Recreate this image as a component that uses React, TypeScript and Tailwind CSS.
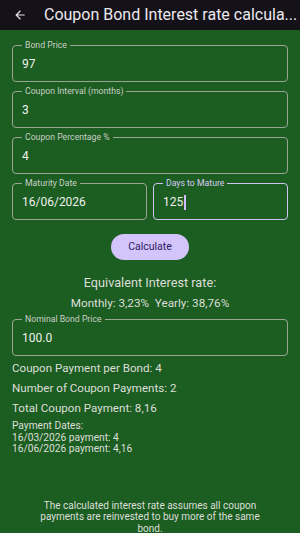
import React from "react";

function Field({
  label,
  value,
  focused = false,
  className = "",
}: {
  label: string;
  value: string;
  focused?: boolean;
  className?: string;
}) {
  return (
    <fieldset
      className={`h-[41px] rounded-[4px] px-[9px] ${
        focused ? "border-[1.5px] border-[#cfc3f0]" : "border border-[#9aa596]"
      } ${className}`}
    >
      <legend
        className={`px-[3px] text-[8.7px] leading-[9px] ${
          focused ? "text-[#d8ccf5]" : "text-[#c9cfc6]"
        }`}
      >
        {label}
      </legend>
      <div className="flex items-center pt-[6px] text-[12px] leading-[16px] text-[#eef0ec]">
        {value}
        {focused && <span className="ml-px inline-block h-[15px] w-[1.5px] bg-[#d0bcff]" />}
      </div>
    </fieldset>
  );
}

export default function App() {
  return (
    <div className="flex h-[533px] w-[300px] flex-col overflow-hidden bg-[#1c5d21] font-['Roboto',sans-serif] text-[#dcdfd9]">
      <div className="flex h-[30px] shrink-0 items-center bg-[#141218] pl-[13px]">
        <svg width="14" height="14" viewBox="0 0 24 24" className="shrink-0">
          <path
            d="M20 11H7.83l5.59-5.59L12 4l-8 8 8 8 1.41-1.41L7.83 13H20v-2z"
            fill="#e6e1e5"
          />
        </svg>
        <div className="ml-[17px] whitespace-nowrap text-[16px] text-[#ece8ee]">
          Coupon Bond Interest rate calcula...
        </div>
      </div>

      <div className="flex flex-col px-[12px] pt-[11px]">
        <div className="flex flex-col gap-[5px]">
          <Field label="Bond Price" value="97" />
          <Field label="Coupon Interval (months)" value="3" />
          <Field label="Coupon Percentage %" value="4" />
          <div className="flex gap-[6px]">
            <Field label="Maturity Date" value="16/06/2026" className="flex-1" />
            <Field label="Days to Mature" value="125" focused className="flex-1" />
          </div>
        </div>

        <div className="mt-[14px] flex justify-center">
          <button className="h-[26px] w-[78px] rounded-full bg-[#d3c4fb] text-[10.5px] text-[#2f1a5e]">
            Calculate
          </button>
        </div>

        <div className="mt-[15px] text-center text-[12.7px] leading-[16px]">
          Equivalent Interest rate:
        </div>
        <div className="mt-[5px] text-center text-[11.7px] leading-[14px]">
          Monthly: 3,23%&nbsp; Yearly: 38,76%
        </div>

        <div className="mt-[5px]">
          <Field label="Nominal Bond Price" value="100.0" />
        </div>

        <div className="mt-[6px] flex flex-col gap-[7px] text-[11.6px] leading-[13px]">
          <div>Coupon Payment per Bond: 4</div>
          <div>Number of Coupon Payments: 2</div>
          <div>Total Coupon Payment: 8,16</div>
        </div>
        <div className="mt-[5px] text-[10.2px] leading-[11.5px]">
          <div>Payment Dates:</div>
          <div>16/03/2026 payment: 4</div>
          <div>16/06/2026 payment: 4,16</div>
        </div>
      </div>

      <div className="mt-auto -mb-[1px] px-[32px] text-center text-[10px] leading-[11.5px]">
        The calculated interest rate assumes all coupon payments are reinvested to buy more of the same bond.
      </div>
    </div>
  );
}
